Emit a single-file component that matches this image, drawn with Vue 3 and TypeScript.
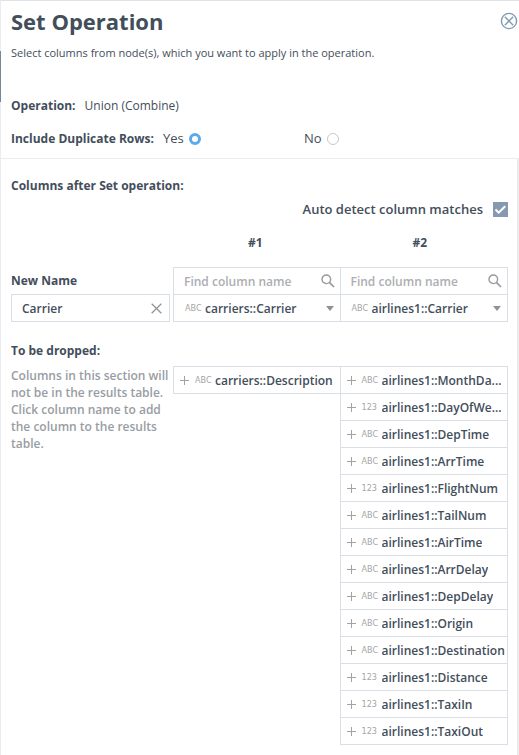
<script setup lang="ts">
import { ref } from 'vue'

type ColumnType = 'ABC' | '123'

interface Column {
  name: string
  type: ColumnType
}

interface Source {
  id: string
  label: string
  selected: Column
  dropped: Column[]
}

const duplicates = ref('yes')
const autoDetect = ref(true)
const newName = ref('Carrier')

const sources: Source[] = [
  {
    id: 'source1',
    label: '#1',
    selected: { name: 'carriers::Carrier', type: 'ABC' },
    dropped: [{ name: 'carriers::Description', type: 'ABC' }],
  },
  {
    id: 'source2',
    label: '#2',
    selected: { name: 'airlines1::Carrier', type: 'ABC' },
    dropped: [
      { name: 'airlines1::MonthDa...', type: 'ABC' },
      { name: 'airlines1::DayOfWe...', type: '123' },
      { name: 'airlines1::DepTime', type: 'ABC' },
      { name: 'airlines1::ArrTime', type: 'ABC' },
      { name: 'airlines1::FlightNum', type: '123' },
      { name: 'airlines1::TailNum', type: 'ABC' },
      { name: 'airlines1::AirTime', type: 'ABC' },
      { name: 'airlines1::ArrDelay', type: 'ABC' },
      { name: 'airlines1::DepDelay', type: 'ABC' },
      { name: 'airlines1::Origin', type: 'ABC' },
      { name: 'airlines1::Destination', type: 'ABC' },
      { name: 'airlines1::Distance', type: '123' },
      { name: 'airlines1::TaxiIn', type: '123' },
      { name: 'airlines1::TaxiOut', type: '123' },
    ],
  },
]
</script>

<template>
  <main class="dialog">
    <span class="edge-mark"></span>
    <header class="top">
      <div class="title-row">
        <h1>Set Operation</h1>
        <button class="icon-button close" type="button" aria-label="Close">
          <svg width="18" height="18" viewBox="0 0 18 18" fill="none" stroke="#8199b1" stroke-width="1.4">
            <circle cx="9" cy="9" r="7.6" />
            <path d="M4.8 4.8l8.4 8.4M13.2 4.8l-8.4 8.4" />
          </svg>
        </button>
      </div>
      <p class="lead">Select columns from node(s), which you want to apply in the operation.</p>
      <div class="field">
        <strong>Operation:</strong>
        <span>Union (Combine)</span>
      </div>
      <div class="field" role="radiogroup" aria-labelledby="dup-label">
        <strong id="dup-label">Include Duplicate Rows:</strong>
        <label class="choice choice-first">Yes <input v-model="duplicates" type="radio" name="dup" value="yes" /></label>
        <label class="choice">No <input v-model="duplicates" type="radio" name="dup" value="no" /></label>
      </div>
    </header>

    <section class="body">
      <h2>Columns after Set operation:</h2>
      <label class="auto">
        Auto detect column matches
        <span class="check">
          <input v-model="autoDetect" type="checkbox" />
          <svg v-if="autoDetect" width="15" height="15" viewBox="0 0 15 15" fill="none" stroke="#fff" stroke-width="2">
            <path d="M2.5 7.5l3.2 3.2 6.5-6.4" />
          </svg>
        </span>
      </label>

      <div class="grid heads">
        <span></span>
        <strong v-for="s in sources" :key="s.id">{{ s.label }}</strong>
      </div>

      <div class="grid">
        <div class="name-col">
          <label class="name-label" for="new-name">New Name</label>
          <div class="cell name-cell">
            <input id="new-name" v-model="newName" type="text" />
            <button class="icon-button" type="button" aria-label="Clear name">
              <svg width="11" height="11" viewBox="0 0 11 11" fill="none" stroke="#8f9499" stroke-width="1.3">
                <path d="M.7.7l9.6 9.6M10.3.7L.7 10.3" />
              </svg>
            </button>
          </div>
        </div>
        <div v-for="s in sources" :key="s.id" class="source">
          <div class="cell search-cell">
            <input type="text" placeholder="Find column name" :aria-label="'Find column name in ' + s.label" />
            <svg width="14" height="14" viewBox="0 0 14 14" fill="none" stroke="#999">
              <circle cx="5.3" cy="5.3" r="4.3" stroke-width="1.4" />
              <path d="M8.4 8.4l4.6 4.6" stroke-width="1.7" />
            </svg>
          </div>
          <div class="cell select-cell">
            <span class="type">{{ s.selected.type }}</span>
            <select :aria-label="'Column from ' + s.label">
              <option>{{ s.selected.name }}</option>
            </select>
            <svg width="8" height="5" viewBox="0 0 8 5"><path d="M0 0h8L4 5z" fill="#929292" /></svg>
          </div>
        </div>
      </div>

      <h2 class="dropped-title">To be dropped:</h2>
      <div class="grid dropped">
        <p class="hint">
          Columns in this section will not be in the results table. Click column name to add the column to the results
          table.
        </p>
        <ul v-for="s in sources" :key="s.id" class="source">
          <li v-for="c in s.dropped" :key="c.name">
            <button class="cell item" type="button">
              <svg width="9" height="9" viewBox="0 0 9 9" stroke="#a3a3a3"><path d="M4.5 0v9M0 4.5h9" /></svg>
              <span class="type">{{ c.type }}</span>
              <span class="item-name">{{ c.name }}</span>
            </button>
          </li>
        </ul>
      </div>
    </section>
  </main>
</template>

<style>
body {
  margin: 0;
  background: #fff;
}
</style>

<style scoped>
* {
  box-sizing: border-box;
}

.dialog {
  position: relative;
  min-height: 100vh;
  display: flex;
  flex-direction: column;
  border-top: 1px solid #dfe2e6;
  border-left: 1px solid #e9edf3;
  font-family: 'Open Sans', sans-serif;
  font-size: 12px;
  line-height: 17px;
  color: #434e5b;
  font-weight: 600;
}

.edge-mark {
  position: absolute;
  left: -1px;
  top: 50px;
  width: 1px;
  height: 51px;
  background: #75879e;
}

h1,
h2,
p,
ul {
  margin: 0;
  padding: 0;
}

ul {
  list-style: none;
}

strong,
h2 {
  font-size: 12px;
  font-weight: 700;
}

.top {
  padding: 5px 1px 11px 10px;
}

.title-row {
  display: flex;
  justify-content: space-between;
  align-items: center;
}

h1 {
  font-size: 22px;
  line-height: 30px;
  font-weight: 700;
}

.icon-button {
  display: flex;
  padding: 0;
  border: 0;
  background: none;
  cursor: pointer;
}

.lead {
  padding-top: 8px;
  font-size: 11px;
  font-weight: 400;
}

.field {
  display: flex;
  align-items: center;
  gap: 9px;
  margin-top: 16px;
  font-weight: 500;
}

.lead + .field {
  margin-top: 36px;
}

.choice {
  display: flex;
  align-items: center;
  gap: 5px;
  font-size: 13px;
}

.choice-first {
  flex: 0 0 132px;
}

input,
select,
button {
  font: inherit;
  color: inherit;
}

input[type='radio'] {
  appearance: none;
  width: 12px;
  height: 12px;
  margin: 0;
  border: 1px solid #c8c8c8;
  border-radius: 50%;
}

input[type='radio']:checked {
  border: 3px solid #5baae9;
}

.body {
  flex: 1;
  padding: 18px 9px 10px 10px;
  border-top: 1px solid #ebecee;
  border-right: 2px solid #ebebeb;
}

.auto {
  display: flex;
  justify-content: flex-end;
  align-items: center;
  gap: 10px;
  margin-top: 7px;
  font-size: 13px;
}

.check {
  position: relative;
  display: flex;
}

.check input {
  appearance: none;
  width: 15px;
  height: 15px;
  margin: 0;
  border: 1px solid #8798b2;
}

.check input:checked {
  background: #8798b2;
}

.check svg {
  position: absolute;
  inset: 0;
  pointer-events: none;
}

.grid {
  display: grid;
  grid-template-columns: 162px 1fr 1fr;
}

.heads {
  margin-top: 16px;
  padding-right: 6px;
  text-align: center;
}

.heads + .grid {
  margin-top: 16px;
}

.name-col {
  display: flex;
  flex-direction: column;
  justify-content: space-between;
  padding-right: 3px;
}

.name-label {
  padding-top: 5px;
  font-weight: 700;
}

.source {
  min-width: 0;
}

.source + .source {
  margin-left: -1px;
}

.cell {
  display: flex;
  align-items: center;
  width: 100%;
  height: 28px;
  border: 1px solid #dadee6;
  background: #fff;
}

.cell + .cell,
li + li {
  margin-top: -1px;
}

.name-cell {
  padding: 0 7px 0 10px;
}

.search-cell {
  padding: 0 5px 0 10px;
}

.select-cell {
  padding: 0 6px 0 11px;
}

.cell input,
.cell select {
  flex: 1;
  min-width: 0;
  width: 0;
  padding: 0;
  border: 0;
  outline: 0;
  background: none;
  appearance: none;
}

.cell input::placeholder {
  color: #acaeb2;
  opacity: 1;
}

.type {
  flex: 0 0 20px;
  font-family: 'Liberation Sans Narrow', 'DejaVu Sans Condensed', sans-serif;
  font-size: 9px;
  font-weight: 400;
  color: #a6a6a6;
}

.dropped-title {
  margin-top: 20px;
}

.dropped {
  margin-top: 7px;
}

.hint {
  padding-top: 1px;
  color: #989da3;
}

.item {
  padding: 0 2px 0 6px;
  text-align: left;
  cursor: pointer;
}

.item svg {
  flex: none;
  margin-right: 6px;
}

.item-name {
  min-width: 0;
  overflow: hidden;
  text-overflow: ellipsis;
  white-space: nowrap;
}
</style>
